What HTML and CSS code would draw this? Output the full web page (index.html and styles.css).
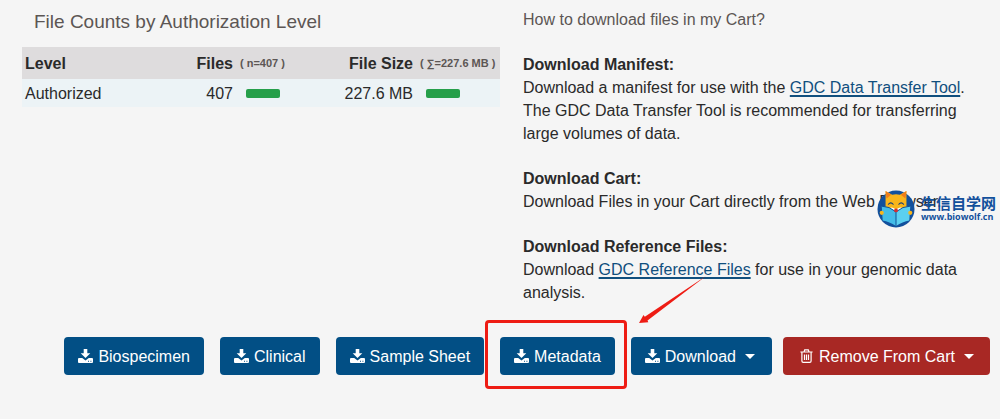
FILE: index.html
```
<!DOCTYPE html>
<html lang="en">
<head>
  <meta charset="UTF-8">
  <meta name="viewport" content="width=device-width, initial-scale=1.0">
  <title>Cart</title>
  <link rel="stylesheet" href="styles.css">
</head>
<body>
  <svg class="defs" aria-hidden="true">
    <symbol id="icon-download" viewBox="0 0 15 14">
      <path d="M5.7 0h3.6v4.2h3L7.5 9 2.7 4.2h3z" />
      <path fill-rule="evenodd" d="M1 9h3.2l3.3 2.4L10.8 9H14q1 0 1 1v3q0 1-1 1H1q-1 0-1-1v-3q0-1 1-1zM10 11.8v1h1v-1zM12.4 11.8v1h1v-1z" />
    </symbol>
    <symbol id="icon-trash" viewBox="0 0 13 14">
      <path fill="none" stroke="currentColor" stroke-width="1.2" d="M.4 3h12.2M4 3l.7-2.2h3.6L9 3M1.9 3v9q0 1.3 1.3 1.3h6.6q1.3 0 1.3-1.3V3M4.5 5.5v5.5M6.5 5.5v5.5M8.5 5.5v5.5" />
    </symbol>
  </svg>

  <main>
    <div class="summary">
      <section class="counts">
        <h1>File Counts by Authorization Level</h1>
        <table>
          <thead>
            <tr>
              <th>Level</th>
              <th class="num files">Files</th>
              <th class="total">( n=407 )</th>
              <th class="num size">File Size</th>
              <th class="total">( ∑=227.6 MB )</th>
            </tr>
          </thead>
          <tbody>
            <tr>
              <td>Authorized</td>
              <td class="num">407</td>
              <td><div class="bar"></div></td>
              <td class="num">227.6 MB</td>
              <td><div class="bar"></div></td>
            </tr>
          </tbody>
        </table>
      </section>

      <section class="help">
        <h2>How to download files in my Cart?</h2>
        <p><strong>Download Manifest:</strong><br>
          Download a manifest for use with the <a href="#">GDC Data Transfer Tool</a>.
          The GDC Data Transfer Tool is recommended for transferring large volumes of data.</p>
        <p><strong>Download Cart:</strong><br>
          Download Files in your Cart directly from the Web Browser.</p>
        <p><strong>Download Reference Files:</strong><br>
          Download <a href="#">GDC Reference Files</a> for use in your genomic data analysis.</p>

        <div class="watermark">
          <svg width="38" height="38" viewBox="0 0 40 40" aria-hidden="true">
            <circle cx="20" cy="20" r="19.5" fill="#12509c" />
            <path fill="#f9b51b" d="M9 19V1l7 4q4-1 8 0l7-4v18l-11 6z" />
            <path fill="#ef7d1a" d="M9 1l6 4-5 4zM31 1l-6 4 5 4z" />
            <path fill="none" stroke="#123f7c" stroke-width="1.2" stroke-linecap="round" d="M12 15q2.5-3 5 0M23 15q2.5-3 5 0" />
            <path fill="#fff" d="M13 19q4-2 7 2 3-4 7-2l-7 4z" />
            <path fill="#42bce8" d="M5 17q8 0 15 6v15Q13 33 6 32z" />
            <path fill="#5bd0f0" d="M35 17q-8 0-15 6v15q7-5 14-6z" />
            <path fill="none" stroke="#0d4c92" d="M5 17q8 0 15 6 7-6 15-6M20 23v15" />
            <circle cx="5" cy="24" r="2.2" fill="#f9b51b" />
            <circle cx="35" cy="24" r="2.2" fill="#f9b51b" />
            <circle cx="20" cy="21.5" r="2" fill="#d52d30" />
          </svg>
          <div>
            <div class="brand" lang="zh">生信自学网</div>
            <div class="site">www.biowolf.cn</div>
          </div>
        </div>
      </section>
    </div>

    <div class="actions">
      <button type="button"><svg class="icon"><use href="#icon-download" /></svg>Biospecimen</button>
      <button type="button"><svg class="icon"><use href="#icon-download" /></svg>Clinical</button>
      <button type="button"><svg class="icon"><use href="#icon-download" /></svg>Sample Sheet</button>
      <div class="marked">
        <button type="button"><svg class="icon"><use href="#icon-download" /></svg>Metadata</button>
        <svg class="arrow" width="68" height="48" viewBox="0 0 68 48" aria-hidden="true">
          <path fill="#ee1c14" d="M67 0L8.5 44.500l.8 1.7L0 47l4.500-8 1.3 1.7z" />
        </svg>
      </div>
      <div class="menus">
        <button type="button" class="menu"><svg class="icon"><use href="#icon-download" /></svg>Download<span class="caret"></span></button>
        <button type="button" class="remove"><svg class="icon"><use href="#icon-trash" /></svg>Remove From Cart<span class="caret"></span></button>
      </div>
    </div>
  </main>
</body>
</html>
```

FILE: styles.css
```
body {
  margin: 0;
  background-color: #f5f5f5;
  color: #2a2a2a;
  font-family: "Liberation Sans", Arial, sans-serif;
  font-size: 16px;
  line-height: 23px;
}
.defs {
  display: none;
}
.summary {
  display: grid;
  grid-template-columns: 1fr 1fr;
}
h1, h2 {
  margin: 0;
  color: #5c5654;
  font-weight: normal;
}
h1 {
  padding: 10px 12px 14px;
  font-size: 19px;
}
h2 {
  margin-bottom: 22px;
  font-size: 16px;
}
.counts {
  padding-left: 22px;
}
table {
  width: 100%;
  border-collapse: collapse;
  table-layout: fixed;
}
th, td {
  height: 28px;
  padding: 0 3px;
  text-align: left;
  white-space: nowrap;
}
th {
  height: 32px;
  background-color: #dedcdd;
}
td {
  background-color: #ecf3f6;
}
.num {
  text-align: right;
}
.files {
  width: 64px;
}
.size {
  width: 90px;
}
.total {
  width: 78px;
  padding: 0 2px 0 4px;
  color: #5c5654;
  font-size: 11px;
}
.bar {
  width: 34px;
  height: 9px;
  margin-left: 7px;
  border-radius: 2px;
  background-color: #269f4a;
}
.help {
  position: relative;
  padding: 8px 30px 0 23px;
}
p {
  margin: 0 0 22px;
}
a {
  color: #104f7e;
  text-decoration-thickness: 2px;
  text-underline-offset: 2px;
}
.watermark {
  position: absolute;
  right: 4px;
  top: 190px;
  display: flex;
  align-items: center;
  gap: 6px;
  color: #12509c;
  font-weight: bold;
}
.brand {
  font-family: "Noto Sans CJK SC", sans-serif;
  font-size: 15px;
  line-height: 16px;
}
.site {
  font-family: "Open Sans", sans-serif;
  font-size: 9px;
  line-height: 12px;
}
.actions {
  display: flex;
  justify-content: flex-end;
  gap: 16px;
  padding: 11px 10px 44px;
}
.menus {
  display: flex;
  gap: 11px;
}
button {
  display: flex;
  align-items: center;
  height: 38px;
  padding: 0 14px;
  border: none;
  border-radius: 4px;
  background-color: #024f85;
  color: white;
  font: inherit;
  white-space: nowrap;
}
.menu {
  padding-right: 17px;
}
.remove {
  padding: 0 16px;
  background-color: #a82824;
}
.icon {
  width: 15px;
  height: 14px;
  margin-right: 5px;
  fill: currentColor;
}
.caret {
  margin-left: 9px;
  border: 5px solid transparent;
  border-top-color: white;
  border-bottom: none;
}
.marked {
  position: relative;
}
.marked::after {
  content: "";
  position: absolute;
  inset: -17px -12px -14px -15px;
  border: 3px solid #ee1c14;
  border-radius: 4px;
  pointer-events: none;
}
.arrow {
  position: absolute;
  left: 139px;
  top: -61px;
}
```
